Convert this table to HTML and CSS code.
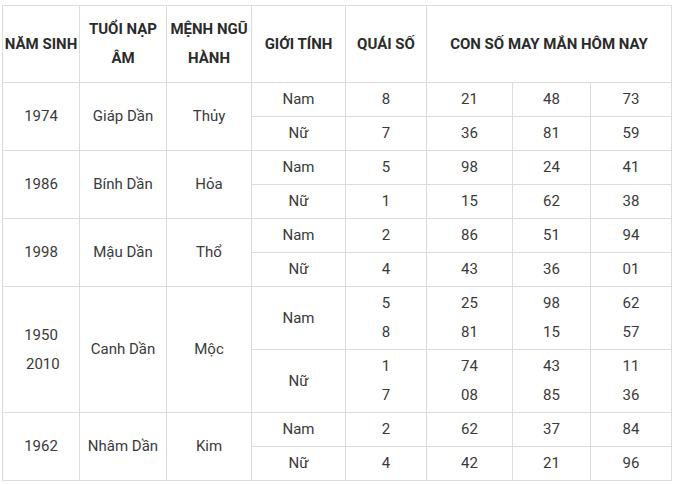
FILE: index.html
```html
<!DOCTYPE html>
<html lang="vi">
<head>
<meta charset="utf-8">
<title>Con số may mắn</title>
<link rel="stylesheet" href="styles.css">
</head>
<body>
<table class="lucky">
  <colgroup>
    <col class="c1"><col class="c2"><col class="c3"><col class="c4"><col class="c5"><col class="c6"><col class="c7"><col class="c8">
  </colgroup>
  <thead>
    <tr class="head">
      <th>NĂM SINH</th>
      <th>TUỔI NẠP ÂM</th>
      <th>MỆNH NGŨ HÀNH</th>
      <th>GIỚI TÍNH</th>
      <th>QUÁI SỐ</th>
      <th colspan="3">CON SỐ MAY MẮN HÔM NAY</th>
    </tr>
  </thead>
  <tbody>
    <tr><td rowspan="2">1974</td><td rowspan="2">Giáp Dần</td><td rowspan="2">Thủy</td><td>Nam</td><td>8</td><td>21</td><td>48</td><td>73</td></tr>
    <tr><td>Nữ</td><td>7</td><td>36</td><td>81</td><td>59</td></tr>
    <tr><td rowspan="2">1986</td><td rowspan="2">Bính Dần</td><td rowspan="2">Hỏa</td><td>Nam</td><td>5</td><td>98</td><td>24</td><td>41</td></tr>
    <tr><td>Nữ</td><td>1</td><td>15</td><td>62</td><td>38</td></tr>
    <tr><td rowspan="2">1998</td><td rowspan="2">Mậu Dần</td><td rowspan="2">Thổ</td><td>Nam</td><td>2</td><td>86</td><td>51</td><td>94</td></tr>
    <tr><td>Nữ</td><td>4</td><td>43</td><td>36</td><td>01</td></tr>
    <tr class="tall"><td rowspan="2">1950<br>&nbsp;2010</td><td rowspan="2">Canh Dần</td><td rowspan="2">Mộc</td><td>Nam</td><td>5<br>8</td><td>25<br>81</td><td>98<br>15</td><td>62<br>57</td></tr>
    <tr class="tall"><td>Nữ</td><td>1<br>7</td><td>74<br>08</td><td>43<br>85</td><td>11<br>36</td></tr>
    <tr><td rowspan="2">1962</td><td rowspan="2">Nhâm Dần</td><td rowspan="2">Kim</td><td>Nam</td><td>2</td><td>62</td><td>37</td><td>84</td></tr>
    <tr><td>Nữ</td><td>4</td><td>42</td><td>21</td><td>96</td></tr>
  </tbody>
</table>
</body>
</html>
```
FILE: styles.css
```css
html, body {
  margin: 0;
  background: #ffffff;
}
body {
  padding: 5px 0 0 2px;
  font-family: Roboto, "Liberation Sans", sans-serif;
  font-size: 15px;
  color: #3a3a3a;
}
.lucky {
  border-collapse: collapse;
  table-layout: fixed;
  width: 669px;
}
.c1 { width: 77px; }
.c2 { width: 87px; }
.c3 { width: 85px; }
.c4 { width: 94px; }
.c5 { width: 81px; }
.c6 { width: 86px; }
.c7 { width: 78px; }
.c8 { width: 81px; }
.lucky th,
.lucky td {
  border: 1px solid #dcdcdc;
  text-align: center;
  vertical-align: middle;
  padding: 0 1px;
  line-height: 29px;
}
.lucky th {
  font-weight: 700;
  color: #2b2b2b;
}
.head { height: 77px; }
.lucky tbody tr { height: 34px; }
.lucky tbody tr.tall { height: 63px; }
```
